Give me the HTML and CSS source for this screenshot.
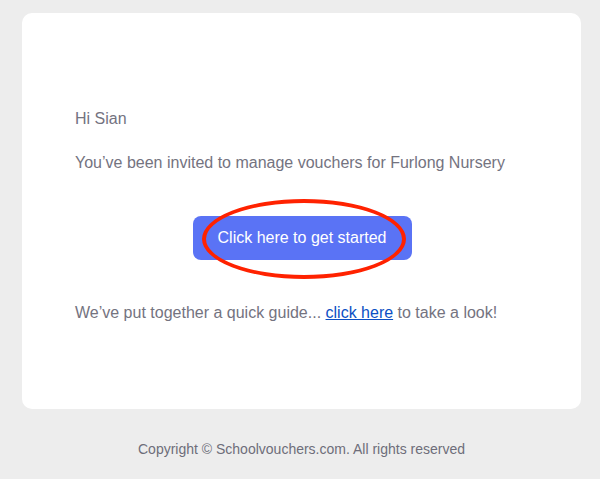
FILE: index.html
```html
<!DOCTYPE html>
<html>

<head>
    <meta charset="utf-8">
    <title>Schoolvouchers</title>
    <meta name="viewport" content="width=device-width, initial-scale=1">
    <link rel="stylesheet" href="styles.css">
</head>

<body>
    <main class="Mail">
        <section class="Card">
            <p>Hi Sian</p>
            <p>You’ve been invited to manage vouchers for Furlong Nursery</p>
            <div class="Action">
                <a class="Button" href="#">Click here to get started</a>
                <span class="Circle"></span>
            </div>
            <p>We’ve put together a quick guide... <a class="Link" href="#">click here</a> to take a look!</p>
        </section>
        <footer class="Footer">Copyright © Schoolvouchers.com. All rights reserved</footer>
    </main>
</body>

</html>
```

FILE: styles.css
```css
* {
    box-sizing: border-box;
    padding: 0;
    margin: 0;
}

body {
    background-color: #ededed;
    font-family: "Liberation Sans", Arial, sans-serif;
    color: #74737f;
}

.Mail {
    width: 559px;
    margin: 13px 0 0 22px;
}

.Card {
    background-color: #ffffff;
    border-radius: 10px;
    padding: 94px 53px 84px;
    display: flex;
    flex-direction: column;
    gap: 20px;

    & p {
        font-size: 16px;
        line-height: 24px;
    }

    & .Link {
        color: #0b4fc4;
        text-decoration: underline;
    }
}

.Action {
    position: relative;
    display: flex;
    justify-content: center;
    margin: 21px 0;
    padding-left: 1px;

    & .Button {
        display: block;
        width: 219px;
        height: 44px;
        line-height: 44px;
        text-align: center;
        font-size: 16px;
        color: #ffffff;
        text-decoration: none;
        background-color: #5a73f5;
        border-radius: 8px;
    }

    & .Circle {
        position: absolute;
        left: 127px;
        top: -17px;
        width: 204px;
        height: 80px;
        border: 4px solid #ff2200;
        border-radius: 50%;
    }
}

.Footer {
    padding-top: 30px;
    text-align: center;
    font-size: 14px;
    line-height: 20px;
    color: #6e6d7a;
}
```
